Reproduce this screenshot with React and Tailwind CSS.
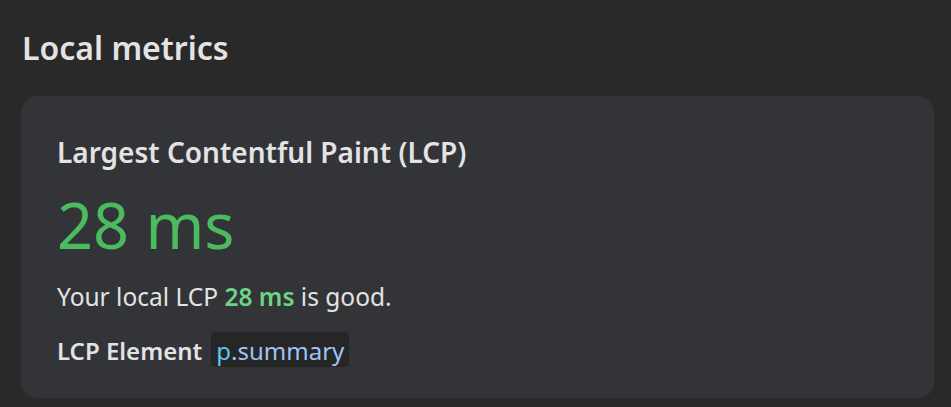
export default function App() {
  return (
    <div
      className="w-[951px] h-[407px] bg-[#292929] overflow-hidden text-[#e3e3e3]"
      style={{ fontFamily: '"Noto Sans", "Open Sans", sans-serif' }}
    >
      <h2 className="pl-[22px] pt-[28px] text-[32px] leading-[40px] font-semibold">Local metrics</h2>
      <div className="ml-[21px] mr-[17px] mt-[28px] h-[302px] rounded-[16px] bg-[#333438] pl-[36px] pt-[38px]">
        <div className="text-[28px] leading-[36px] font-semibold">Largest Contentful Paint (LCP)</div>
        <div className="mt-[15px] text-[63px] leading-[80px] text-[#4cbb5f]">28 ms</div>
        <div className="mt-[17px] text-[24.5px] leading-[30px]">
          Your local LCP <span className="font-semibold text-[#6dd385]">28 ms</span> is good.
        </div>
        <div className="mt-[20px] flex h-[35px] items-center gap-[9px]">
          <span className="mt-[2px] text-[24px] leading-[30px] font-semibold">LCP Element</span>
          <span className="flex h-[35px] items-center rounded-[4px] bg-[#262626] pl-[5px] pr-[5px] text-[24px] leading-[30px]">
            <span className="mt-[2px] text-[#5cc6f2]">p</span>
            <span className="mt-[2px] text-[#9ec3f7]">.summary</span>
          </span>
        </div>
      </div>
    </div>
  );
}
